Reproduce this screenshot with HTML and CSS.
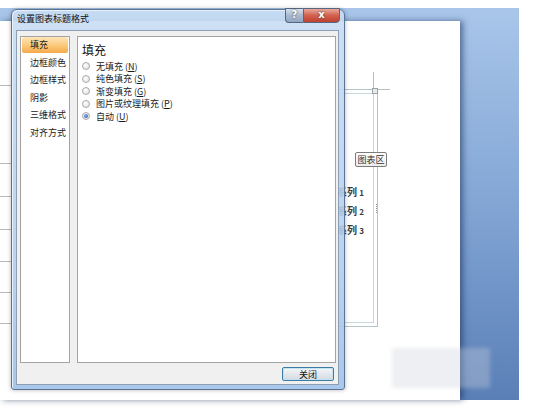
FILE: index.html
```html
<!DOCTYPE html>
<html lang="zh-CN">
<head>
<meta charset="UTF-8">
<meta name="viewport" content="width=device-width, initial-scale=1.0">
<title>设置图表标题格式</title>
<link rel="stylesheet" href="styles.css">
</head>
<body>

<div class="screen">
  <div class="workspace">
    <div class="page">
      <!-- table edge on the left of the page -->
      <div class="rule" style="top:64px"></div>
      <div class="rule" style="top:142px"></div>
      <div class="rule" style="top:175px"></div>
      <div class="rule" style="top:208px"></div>
      <div class="rule" style="top:240px"></div>
      <div class="rule" style="top:271px"></div>
      <div class="rule" style="top:302px"></div>

      <!-- chart object -->
      <div class="plot-frame"></div>
      <div class="guide-v"></div>
      <div class="guide-h"></div>
      <div class="guide-dot"></div>
      <div class="grip"></div>
      <div class="chart-tag">图表区</div>
      <div class="legend">
        <div>系列 <small>1</small></div>
        <div>系列 <small>2</small></div>
        <div>系列 <small>3</small></div>
      </div>
    </div>
  </div>

  <div class="dialog">
    <div class="titlebar">
      <span class="title">设置图表标题格式</span>
      <div class="caption-btns">
        <span class="cap-help">?</span>
        <span class="cap-close">x</span>
      </div>
    </div>
    <div class="body">
      <div class="panes">
        <div class="nav">
          <div class="nav-item active">填充</div>
          <div class="nav-item">边框颜色</div>
          <div class="nav-item">边框样式</div>
          <div class="nav-item">阴影</div>
          <div class="nav-item">三维格式</div>
          <div class="nav-item">对齐方式</div>
        </div>
        <div class="panel">
          <h2>填充</h2>
          <label class="option"><span class="radio"></span>无填充 (<u>N</u>)</label>
          <label class="option"><span class="radio"></span>纯色填充 (<u>S</u>)</label>
          <label class="option"><span class="radio"></span>渐变填充 (<u>G</u>)</label>
          <label class="option"><span class="radio"></span>图片或纹理填充 (<u>P</u>)</label>
          <label class="option"><span class="radio checked"></span>自动 (<u>U</u>)</label>
        </div>
      </div>
      <div class="footer">
        <button class="btn">关闭</button>
      </div>
    </div>
  </div>

  <div class="smudge"></div>
</div>

</body>
</html>
```

FILE: styles.css
```css
body {
  margin: 0;
  padding: 0;
  background-color: #fff;
  font-family: "Noto Sans CJK SC", "DejaVu Sans", sans-serif;
  color: #222;
}

.screen {
  position: relative;
  width: 545px;
  height: 414px;
  padding-top: 8px;
  box-sizing: border-box;
  overflow: hidden;
}

.workspace {
  width: 519px;
  height: 392px;
  padding-top: 13px;
  box-sizing: border-box;
  background: linear-gradient(180deg, #a9c6ea 0%, #86a9d7 45%, #5a7fb7 100%);
}

.page {
  position: relative;
  width: 460px;
  height: 379px;
  background-color: #fff;
  box-shadow: 3px 0 6px rgba(20, 40, 80, 0.55);
}

.rule {
  position: absolute;
  left: 0;
  width: 12px;
  height: 1px;
  background-color: #b9b9b9;
}

.plot-frame {
  position: absolute;
  left: 200px;
  top: 68px;
  width: 178px;
  height: 238px;
  box-sizing: border-box;
  border: 1px solid #b3c5c9;
  box-shadow: inset 0 0 0 3px #fff, inset 0 0 0 4px #c6d8dc;
}

.guide-v {
  position: absolute;
  left: 373px;
  top: 51px;
  width: 1px;
  height: 18px;
  background-color: #b8bcbe;
}

.guide-h {
  position: absolute;
  left: 378px;
  top: 68px;
  width: 12px;
  height: 1px;
  background-color: #b8bcbe;
}

.guide-dot {
  position: absolute;
  left: 372px;
  top: 67px;
  width: 4px;
  height: 4px;
  border: 1px solid #9aa3a6;
  background-color: #e6eaeb;
}

.grip {
  position: absolute;
  left: 376px;
  top: 183px;
  width: 1px;
  height: 9px;
  border-left: 1px dotted #8a9598;
}

.chart-tag {
  position: absolute;
  left: 355px;
  top: 131px;
  width: 32px;
  height: 15px;
  box-sizing: border-box;
  border: 1px solid #7c7c7c;
  border-radius: 2px;
  background: linear-gradient(#ffffff, #ebebeb);
  font-size: 9px;
  line-height: 13px;
  text-align: center;
  color: #333;
}

.legend {
  position: absolute;
  left: 337px;
  top: 162px;
  font-size: 10px;
  font-weight: bold;
  line-height: 18px;
  color: #3a3a3a;
}

.legend small {
  font-size: 8px;
}

/* dialog window */

.dialog {
  position: absolute;
  left: 11px;
  top: 9px;
  width: 334px;
  height: 381px;
  box-sizing: border-box;
  display: flex;
  flex-direction: column;
  border: 1px solid #5b7496;
  border-radius: 6px 6px 3px 3px;
  background: linear-gradient(180deg, rgba(200, 221, 244, 0.9) 0%, rgba(180, 207, 238, 0.88) 60%, rgba(160, 194, 232, 0.9) 100%);
  box-shadow: inset 1px 1px 0 rgba(240, 247, 255, 0.8), 0 0 4px rgba(0, 0, 0, 0.3);
}

.titlebar {
  height: 20px;
  display: flex;
  align-items: center;
  padding-left: 5px;
}

.title {
  font-size: 9px;
  color: #111;
  margin-top: -4px;
}

.caption-btns {
  display: flex;
  margin-left: auto;
  margin-right: 4px;
  align-self: flex-start;
  margin-top: -2px;
}

.cap-help,
.cap-close {
  height: 15px;
  box-sizing: border-box;
  border: 1px solid #55667e;
  font-family: "DejaVu Sans", sans-serif;
  font-size: 10px;
  font-weight: bold;
  line-height: 12px;
  text-align: center;
  color: #fff;
  text-shadow: 0 0 2px #333;
}

.cap-help {
  width: 18px;
  border-right: none;
  border-radius: 0 0 0 4px;
  background: linear-gradient(#d6e1ee, #a8b9cf 50%, #93a8c3);
}

.cap-close {
  width: 37px;
  border-radius: 0 0 4px 0;
  background: linear-gradient(#e8a99c, #d2614f 50%, #c0402e);
}

.body {
  flex: 1;
  margin: 0 5px 4px 4px;
  padding: 5px 2px 3px 3px;
  display: flex;
  flex-direction: column;
  border: 1px solid #8e9fb5;
  background-color: #f0f0f0;
}

.panes {
  display: flex;
  gap: 7px;
  height: 327px;
}

.nav {
  width: 50px;
  box-sizing: border-box;
  padding: 0 1px;
  border: 1px solid #a3a3a3;
  background-color: #fff;
}

.nav-item {
  height: 16px;
  margin-bottom: 1.6px;
  padding-left: 8px;
  font-size: 9px;
  line-height: 16px;
  color: #1a1a1a;
  white-space: nowrap;
}

.nav-item.active {
  border-radius: 2px;
  background: linear-gradient(#fde5b9, #fbc878 55%, #f6a94a);
}

.panel {
  flex: 1;
  padding: 6px 4px;
  border: 1px solid #a3a3a3;
  background-color: #fff;
}

.panel h2 {
  margin: 0 0 3px;
  font-size: 12px;
  font-weight: normal;
  line-height: 14px;
  color: #111;
}

.option {
  display: flex;
  align-items: center;
  height: 12.5px;
  font-size: 9px;
  color: #1a1a1a;
  white-space: nowrap;
}

.radio {
  width: 8px;
  height: 8px;
  box-sizing: border-box;
  margin-right: 6px;
  border: 1px solid #a9a9a9;
  border-radius: 50%;
  background: radial-gradient(circle at 40% 35%, #fff, #dcdcdc);
  display: flex;
  align-items: center;
  justify-content: center;
}

.radio.checked::after {
  content: "";
  width: 4px;
  height: 4px;
  border-radius: 50%;
  background: radial-gradient(circle at 40% 35%, #7fb0ea, #1d56a8);
}

.footer {
  display: flex;
  justify-content: flex-end;
  margin-top: 4px;
  padding-right: 2px;
}

.btn {
  width: 52px;
  height: 14px;
  box-sizing: border-box;
  padding: 0;
  border: 1px solid #3d7ba3;
  border-radius: 2px;
  background: linear-gradient(#f4f7f9, #e3e8ec 50%, #d3dadf);
  box-shadow: inset 0 0 0 1px #c3e3f5;
  font-family: "Noto Sans CJK SC", sans-serif;
  font-size: 9px;
  line-height: 11px;
  color: #111;
}

.smudge {
  position: absolute;
  left: 392px;
  top: 348px;
  width: 98px;
  height: 40px;
  background: rgba(205, 210, 220, 0.35);
  filter: blur(2px);
}
```
